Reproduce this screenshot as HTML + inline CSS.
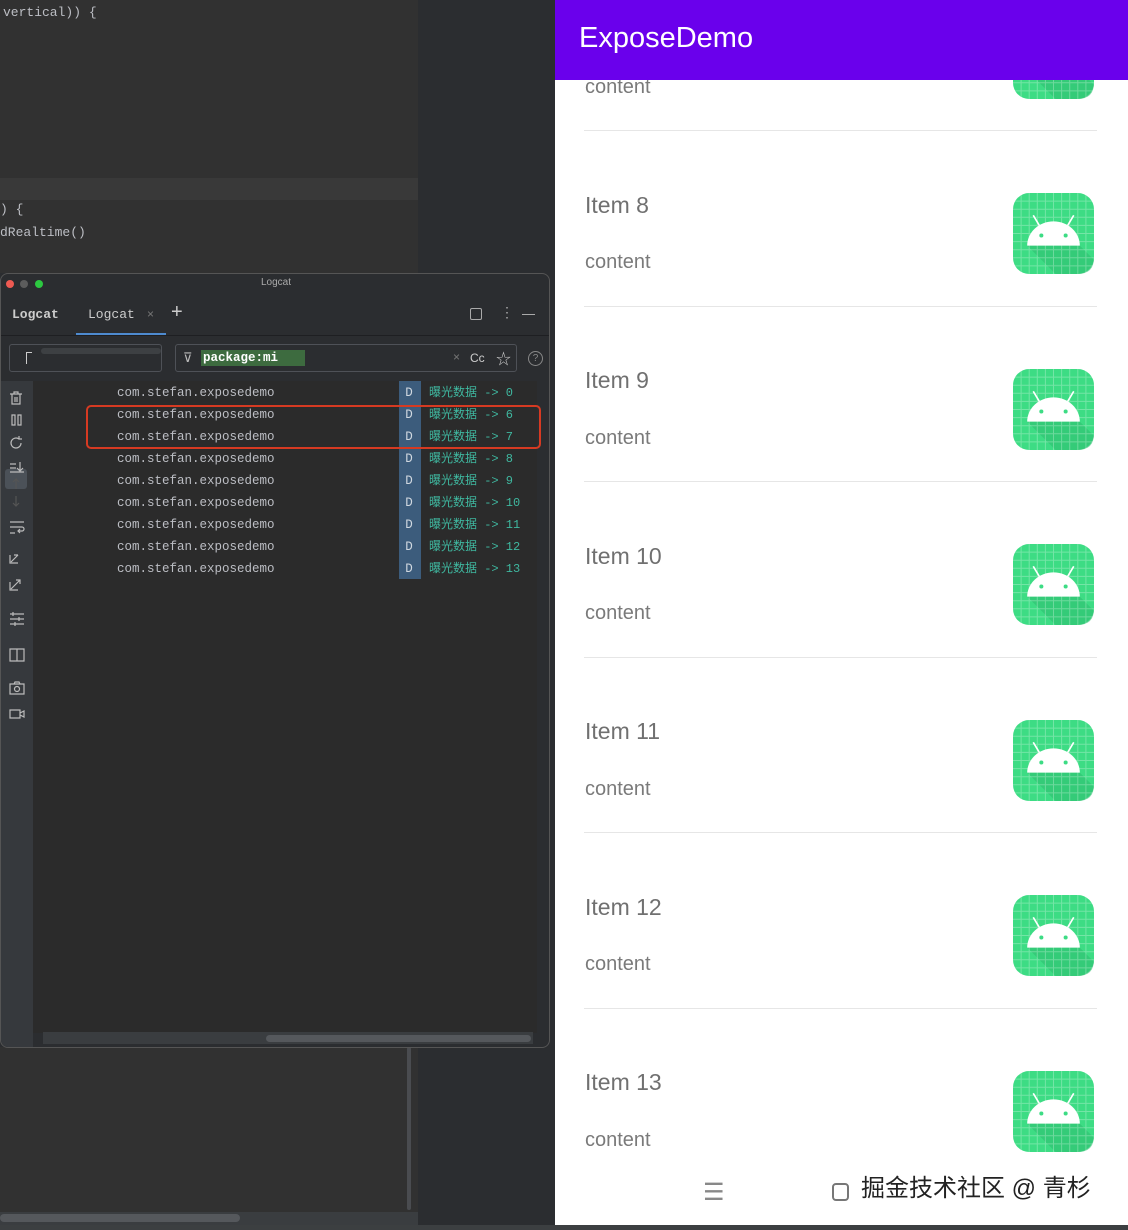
<!DOCTYPE html>
<html><head><meta charset="utf-8"><style>
*{margin:0;padding:0;box-sizing:border-box}
body{width:1128px;height:1230px;overflow:hidden;background:#2b2d30;position:relative;font-family:"Liberation Sans","Noto Sans CJK SC",sans-serif}
.a{position:absolute}
.mono{font-family:"Liberation Mono","Noto Sans CJK SC",monospace}
.row{position:absolute;left:0;width:540px;height:22px;font-size:12.5px;line-height:22px;color:#bcbec4;white-space:nowrap}
.row .p{position:absolute;left:117px}
.row .d{position:absolute;left:398px;width:22px;text-align:center;color:#d0d8e0;height:22px}
.row .m{position:absolute;left:429px;color:#3fb8a0;white-space:nowrap;font-size:12px}
.title{position:absolute;left:30px;font-size:23px;color:#707070;font-weight:300}
.cont{position:absolute;left:30px;font-size:20px;color:#7a7a7a;font-weight:300}
.sep{position:absolute;left:29px;width:513px;height:1px;background:#e6e6e6}
.ic{position:absolute;left:458px;width:81px;height:81px}
.tb{position:absolute;left:8px;width:16px;height:14px}
</style></head><body>
<svg width="0" height="0" style="position:absolute"><defs>
<symbol id="and" viewBox="0 0 80 80">
<rect x="0" y="0" width="80" height="80" rx="16" fill="#3ddc84"/>
<path d="M14 52 L66 52 L80 66 L80 64 Q80 80 64 80 L42 80 Z" fill="#2fbf6f" opacity=".6"/>
<g stroke="#fff" stroke-opacity=".28" stroke-width="1">
<path d="M8 0V80M16 0V80M24 0V80M32 0V80M40 0V80M48 0V80M56 0V80M64 0V80M72 0V80M0 8H80M0 16H80M0 24H80M0 32H80M0 40H80M0 48H80M0 56H80M0 64H80M0 72H80"/>
</g>
<path d="M14 52 A26 24 0 0 1 66 52 Z" fill="#fff"/>
<path d="M26 32 L20 22 M54 32 L60 22" stroke="#fff" stroke-width="1.6"/>
<circle cx="28" cy="42" r="2" fill="#3ddc84"/><circle cx="52" cy="42" r="2" fill="#3ddc84"/>
</symbol></defs></svg>

<!-- editor -->
<div class="a" style="left:0;top:0;width:418px;height:273px;background:#313131"></div>
<div class="a" style="left:0;top:178px;width:418px;height:22px;background:#393939"></div>
<div class="a mono" style="left:3px;top:5px;color:#bcbec4;font-size:13px">vertical)) {</div>
<div class="a mono" style="left:0;top:202px;color:#bcbec4;font-size:13px">) {</div>
<div class="a mono" style="left:0;top:225px;color:#bcbec4;font-size:13px">dRealtime()</div>
<div class="a" style="left:0;top:1047px;width:418px;height:178px;background:#313131"></div>
<div class="a" style="left:407px;top:1047px;width:4px;height:163px;background:#4a4c50;border-radius:2px"></div>
<div class="a" style="left:0;top:1212px;width:418px;height:13px;background:#3a3d40"></div>
<div class="a" style="left:0;top:1214px;width:240px;height:8px;background:#55585c;border-radius:4px"></div>
<div class="a" style="left:0;top:1225px;width:1128px;height:5px;background:#3c3f41"></div>

<!-- logcat window -->
<div class="a" style="left:0;top:273px;width:550px;height:775px;background:#2b2d30;border:1px solid #555;border-radius:8px;overflow:hidden">
 <div class="a" style="left:5px;top:6px;width:8px;height:8px;border-radius:50%;background:#ee5a52"></div>
 <div class="a" style="left:19px;top:6px;width:8px;height:8px;border-radius:50%;background:#5c5c5c"></div>
 <div class="a" style="left:34px;top:6px;width:8px;height:8px;border-radius:50%;background:#2cc840"></div>
 <div class="a" style="left:0;width:550px;top:3px;text-align:center;color:#aaa;font-size:10px">Logcat</div>
 <div class="a mono" style="left:11px;top:33px;color:#ccc;font-size:13px;font-weight:bold">Logcat</div>
 <div class="a mono" style="left:87px;top:33px;color:#ccc;font-size:13px">Logcat</div>
 <div class="a" style="left:146px;top:33px;color:#777;font-size:12px">×</div>
 <div class="a" style="left:170px;top:27px;color:#ccc;font-size:20px;font-weight:300">+</div>
 <div class="a" style="left:75px;top:59px;width:90px;height:3px;background:#4e8bd0"></div>
 <div class="a" style="left:469px;top:34px;width:12px;height:12px;border:1px solid #aaa;border-radius:2px"></div>
 <div class="a" style="left:499px;top:30px;color:#aaa;font-size:14px">⋮</div>
 <div class="a" style="left:521px;top:40px;width:13px;height:1px;background:#aaa"></div>
 <div class="a" style="left:0;top:61px;width:550px;height:1px;background:#1e1f22"></div>
 <div class="a" style="left:8px;top:70px;width:153px;height:28px;border:1px solid #4e5157;border-radius:3px"></div>
 <div class="a" style="left:25px;top:78px;width:6px;height:12px;border-left:1px solid #ccc;border-top:1px solid #ccc"></div>
 <div class="a" style="left:40px;top:74px;width:120px;height:6px;background:#4a4c50;border-radius:4px;opacity:.6"></div>
 <div class="a" style="left:174px;top:70px;width:342px;height:28px;border:1px solid #4e5157;border-radius:3px"></div>
 <div class="a" style="left:182px;top:76px;color:#bbb;font-size:13px">⊽</div>
 <div class="a mono" style="left:200px;top:76px;height:16px;width:104px;background:#3d6b3f;color:#fff;font-size:12.5px;font-weight:bold;line-height:16px;padding-left:2px">package:mi</div>
 <div class="a" style="left:452px;top:76px;color:#777;font-size:12px">×</div>
 <div class="a" style="left:469px;top:77px;color:#ccc;font-size:12px">Cc</div>
 <div class="a" style="left:495px;top:74px;color:#ccc;font-size:15px">☆</div>
 <div class="a" style="left:527px;top:77px;width:15px;height:15px;border:1px solid #888;border-radius:50%;color:#888;font-size:10px;text-align:center;line-height:13px">?</div>
 <!-- left toolbar -->
 <div class="a" style="left:0;top:107px;width:32px;height:668px;background:#36393d"></div>
 <div class="a" style="left:4px;top:195px;width:22px;height:20px;background:#4b5158;border-radius:3px"></div>
 <svg class="a" style="left:0;top:107px" width="32" height="380" fill="none" stroke="#bbb" stroke-width="1.2">
  <path d="M9 13h12M13 13v-2h4v2M11 13v10h8v-10M14 16v5M16 16v5"/>
  <path d="M11 34h3v10h-3zM17 34h3v10h-3z"/>
  <path d="M20 62a5 5 0 1 1-2-4M18 55v3h3"/>
  <path d="M9 83h6M9 87h6M9 91h14M19 81v9l-3-3M19 90l3-3"/>
  <path stroke="#555" d="M15 108v-10l-3 3M15 98l3 3M15 125v-10M12 122l3 3 3-3"/>
  <path d="M9 141h14M9 146h12a2 2 0 0 1 0 4h-4M19 148l-2 2 2 2M9 152h5"/>
  <path d="M9 174v8h8M10 181l7-7M13 174h4"/>
  <path d="M9 201v8h8M10 208l9-9M15 199h4v4"/>
  <path d="M9 233h14M9 238h14M9 243h14M12 231v4M18 236v4M14 241v4"/>
  <path d="M9 268h14v12H9zM16 268v12"/>
  <path d="M9 303h14v10H9zM13 303l1-2h4l1 2"/><circle cx="16" cy="308" r="2.5"/>
  <path d="M9 329h10v8H9zM19 332l4-2v6l-4-2"/>
 </svg>
 <!-- log area -->
 <div class="a" style="left:32px;top:107px;width:516px;height:652px;background:#2b2b2b">
  <div class="a" style="left:366px;top:0;width:22px;height:198px;background:#3c5c7c"></div>
  <div class="a" style="left:504px;top:0;width:12px;height:652px;background:#2b2d30"></div>
 </div>
 <div class="a" style="left:42px;top:758px;width:490px;height:12px;background:#3a3d40"></div>
 <div class="a" style="left:265px;top:761px;width:265px;height:7px;background:#55585c;border-radius:4px"></div>
</div>
<!-- rows -->
<div class="a mono" style="left:0;top:0">
 <div class="row" style="top:382px"><span class="p">com.stefan.exposedemo</span><span class="d">D</span><span class="m">曝光数据 -&gt; 0</span></div>
 <div class="row" style="top:404px"><span class="p">com.stefan.exposedemo</span><span class="d">D</span><span class="m">曝光数据 -&gt; 6</span></div>
 <div class="row" style="top:426px"><span class="p">com.stefan.exposedemo</span><span class="d">D</span><span class="m">曝光数据 -&gt; 7</span></div>
 <div class="row" style="top:448px"><span class="p">com.stefan.exposedemo</span><span class="d">D</span><span class="m">曝光数据 -&gt; 8</span></div>
 <div class="row" style="top:470px"><span class="p">com.stefan.exposedemo</span><span class="d">D</span><span class="m">曝光数据 -&gt; 9</span></div>
 <div class="row" style="top:492px"><span class="p">com.stefan.exposedemo</span><span class="d">D</span><span class="m">曝光数据 -&gt; 10</span></div>
 <div class="row" style="top:514px"><span class="p">com.stefan.exposedemo</span><span class="d">D</span><span class="m">曝光数据 -&gt; 11</span></div>
 <div class="row" style="top:536px"><span class="p">com.stefan.exposedemo</span><span class="d">D</span><span class="m">曝光数据 -&gt; 12</span></div>
 <div class="row" style="top:558px"><span class="p">com.stefan.exposedemo</span><span class="d">D</span><span class="m">曝光数据 -&gt; 13</span></div>
</div>
<div class="a" style="left:86px;top:405px;width:455px;height:44px;border:2.5px solid #d63a22;border-radius:5px"></div>

<!-- phone -->
<div class="a" style="left:555px;top:0;width:573px;height:1225px;background:#fff;overflow:hidden">
 <div class="cont" style="top:76px">content</div>
 <svg class="ic" style="top:18px"><use href="#and"/></svg>
 <div class="sep" style="top:130px"></div>

 <div class="title" style="top:192px">Item 8</div><div class="cont" style="top:251px">content</div>
 <svg class="ic" style="top:193px"><use href="#and"/></svg><div class="sep" style="top:306px"></div>

 <div class="title" style="top:367px">Item 9</div><div class="cont" style="top:427px">content</div>
 <svg class="ic" style="top:369px"><use href="#and"/></svg><div class="sep" style="top:481px"></div>

 <div class="title" style="top:543px">Item 10</div><div class="cont" style="top:602px">content</div>
 <svg class="ic" style="top:544px"><use href="#and"/></svg><div class="sep" style="top:657px"></div>

 <div class="title" style="top:718px">Item 11</div><div class="cont" style="top:778px">content</div>
 <svg class="ic" style="top:720px"><use href="#and"/></svg><div class="sep" style="top:832px"></div>

 <div class="title" style="top:894px">Item 12</div><div class="cont" style="top:953px">content</div>
 <svg class="ic" style="top:895px"><use href="#and"/></svg><div class="sep" style="top:1008px"></div>

 <div class="title" style="top:1069px">Item 13</div><div class="cont" style="top:1129px">content</div>
 <svg class="ic" style="top:1071px"><use href="#and"/></svg>

 <div class="a" style="left:0;top:0;width:573px;height:80px;background:#6a00ec"></div>
 <div class="a" style="left:24px;top:22px;color:#fff;font-size:29px">ExposeDemo</div>

 <div class="a" style="left:148px;top:1178px;color:#888;font-size:24px">☰</div>
 <div class="a" style="left:277px;top:1183px;width:17px;height:18px;border:2px solid #777;border-radius:4px"></div>
 <div class="a" style="left:306px;top:1168px;color:#222;font-size:24px;text-shadow:0 0 1px #fff">掘金技术社区 @ 青杉</div>
</div>
</body></html>
